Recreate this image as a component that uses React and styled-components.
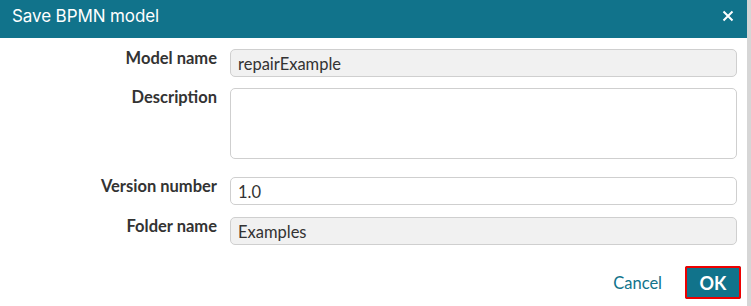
import React from "react";
import styled, { createGlobalStyle } from "styled-components";

const Global = createGlobalStyle`
  html, body { margin: 0; padding: 0; background: #d6d6d6; }
  body { font-family: Lato, "Liberation Sans", sans-serif; }
  * { box-sizing: border-box; }
`;

const Dialog = styled.div`
  width: 747px;
  height: 306px;
  background: #fff;
  display: flex;
  flex-direction: column;
`;

const Header = styled.div`
  height: 38px;
  background: #11738b;
  color: #fff;
  display: flex;
  align-items: center;
  justify-content: space-between;
  padding: 0 13px 0 12px;
`;

const Title = styled.h1`
  margin: 0;
  font-family: Inter, "Noto Sans", sans-serif;
  font-weight: 400;
  font-size: 17px;
  letter-spacing: -0.1px;
  padding-bottom: 6px;
`;

const CloseButton = styled.button`
  background: none;
  border: none;
  padding: 0;
  width: 12px;
  height: 12px;
  display: flex;
  color: #fff;
  cursor: pointer;
  margin-bottom: 7px;
`;

const Form = styled.div`
  display: grid;
  grid-template-columns: 217px 1fr;
  column-gap: 13px;
  padding: 11px 10px 0 0;
`;

const Label = styled.label`
  text-align: right;
  font-weight: 700;
  font-size: 16.5px;
  color: #333;
  line-height: 18px;
  margin-bottom: ${(p) => p.$gap}px;
`;

const Field = styled.div`
  height: ${(p) => p.$h}px;
  margin-bottom: ${(p) => p.$gap}px;
  border: 1px solid #cfcfcf;
  border-radius: 5px;
  background: ${(p) => (p.$readOnly ? "#f1f1f1" : "#fff")};
  color: #333;
  font-size: 16.5px;
  padding: 4px 7px 0;
  line-height: 20px;
`;

const Footer = styled.div`
  margin-top: auto;
  display: flex;
  justify-content: flex-end;
  align-items: center;
  gap: 23px;
  padding: 0 6px 7px 0;
`;

const CancelButton = styled.button`
  background: none;
  border: none;
  padding: 0;
  font-family: Lato, "Liberation Sans", sans-serif;
  font-size: 16.5px;
  color: #11738b;
  cursor: pointer;
`;

const OkButton = styled.button`
  width: 56px;
  height: 33px;
  background: #11738b;
  border: 1px solid #11738b;
  outline: 2px solid #ee0000;
  outline-offset: -2px;
  border-radius: 2px;
  color: #fff;
  font-family: Lato, "Liberation Sans", sans-serif;
  font-weight: 700;
  font-size: 18px;
  cursor: pointer;
`;

const rows = [
  { label: "Model name", value: "repairExample", h: 28, gap: 11, ro: true },
  { label: "Description", value: "", h: 71, gap: 18, ro: false },
  { label: "Version number", value: "1.0", h: 28, gap: 12, ro: false },
  { label: "Folder name", value: "Examples", h: 28, gap: 0, ro: true },
];

export default function App() {
  return (
    <>
      <Global />
      <Dialog>
        <Header>
          <Title>Save BPMN model</Title>
          <CloseButton aria-label="close">
            <svg width="12" height="12" viewBox="0 0 12 12">
              <path d="M1.5 1.5 L10.5 10.5 M10.5 1.5 L1.5 10.5" stroke="#fff" strokeWidth="2" />
            </svg>
          </CloseButton>
        </Header>
        <Form>
          {rows.map((r) => (
            <React.Fragment key={r.label}>
              <Label $gap={r.gap}>{r.label}</Label>
              <Field $h={r.h} $gap={r.gap} $readOnly={r.ro}>
                {r.value}
              </Field>
            </React.Fragment>
          ))}
        </Form>
        <Footer>
          <CancelButton>Cancel</CancelButton>
          <OkButton>OK</OkButton>
        </Footer>
      </Dialog>
    </>
  );
}
